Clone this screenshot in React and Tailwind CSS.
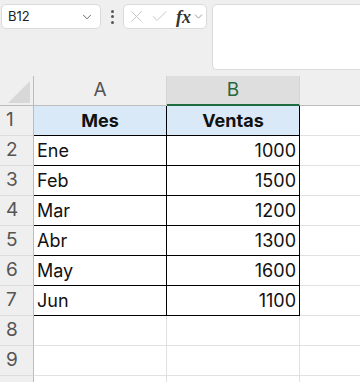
import { ChevronDown, X, Check } from 'lucide-react'

const rows = [
  ['Ene', 1000],
  ['Feb', 1500],
  ['Mar', 1200],
  ['Abr', 1300],
  ['May', 1600],
  ['Jun', 1100],
]

function RowHead({ n }) {
  return (
    <div className="flex h-full w-[34px] shrink-0 items-center border-r border-b border-r-[#bcbcbc] border-b-[#dcdcdc] bg-[#efefef] pl-[6px] text-[19px] text-[#555]">
      {n}
    </div>
  )
}

function Toolbar() {
  return (
    <div className="flex h-[76px] items-start bg-[#efefef] pt-[4px]">
      <div className="ml-px flex h-[25px] w-[100px] items-center justify-between rounded-[5px] border border-[#dadada] bg-white pl-[6px] pr-[6px] text-[13px] text-[#222]">
        <span>B12</span>
        <ChevronDown className="h-[14px] w-[14px] text-[#555]" strokeWidth={1.5} />
      </div>
      <div className="flex h-[25px] w-[22px] flex-col items-center justify-center gap-[2.5px]">
        <span className="h-[3px] w-[3px] rounded-full bg-[#555]" />
        <span className="h-[3px] w-[3px] rounded-full bg-[#555]" />
        <span className="h-[3px] w-[3px] rounded-full bg-[#555]" />
      </div>
      <div className="flex h-[25px] w-[84px] items-center rounded-[5px] border border-[#dadada] bg-white pl-[3px]">
        <X className="h-[19px] w-[19px] text-[#c4c4c4]" strokeWidth={1.2} />
        <Check className="ml-[4px] h-[19px] w-[19px] text-[#c4c4c4]" strokeWidth={1.2} />
        <span className="ml-[7px] text-[18px] font-bold italic leading-none text-[#333] [font-family:'Liberation_Serif',serif]">fx</span>
        <ChevronDown className="ml-[1px] h-[13px] w-[13px] text-[#888]" strokeWidth={1.5} />
      </div>
      <div className="ml-[5px] h-[66px] flex-1 rounded-l-[5px] border border-r-0 border-[#dadada] bg-white" />
    </div>
  )
}

export default function App() {
  return (
    <div className="h-[382px] w-[360px] overflow-hidden bg-white [font-family:Inter,'Liberation_Sans',sans-serif]">
      <Toolbar />

      {/* column headers */}
      <div className="flex h-[30px] bg-[#efefef]">
        <div className="relative w-[34px] shrink-0 border-r border-b border-[#bcbcbc]">
          <svg className="absolute right-[3px] bottom-[2px]" width="22" height="22" viewBox="0 0 22 22">
            <polygon points="22,0 22,22 0,22" fill="#d8d8d8" />
          </svg>
        </div>
        <div className="flex w-[133px] shrink-0 items-center justify-center border-r border-b border-r-[#d4d4d4] border-b-[#bcbcbc] text-[19px] text-[#555]">
          A
        </div>
        <div className="flex w-[133px] shrink-0 items-center justify-center border-r border-b-2 border-r-[#d4d4d4] border-b-[#1e6b41] bg-[#dedede] text-[19px] text-[#1e6b41]">
          B
        </div>
        <div className="flex-1 border-b border-[#bcbcbc]" />
      </div>

      {/* header row */}
      <div className="flex h-[30px]">
        <RowHead n={1} />
        <div className="flex w-[133px] shrink-0 items-center justify-center border-r border-b border-black bg-[#dae9f8] text-[18px] font-bold text-[#111]">
          Mes
        </div>
        <div className="flex w-[133px] shrink-0 items-center justify-center border-r border-b border-black bg-[#dae9f8] text-[18px] font-bold text-[#111]">
          Ventas
        </div>
        <div className="flex-1 border-b border-[#e1e1e1]" />
      </div>

      {rows.map(([mes, ventas], i) => (
        <div key={mes} className="flex h-[30px]">
          <RowHead n={i + 2} />
          <div className="flex w-[133px] shrink-0 items-center border-r border-b border-black pl-[3px] text-[18px] text-[#111]">
            {mes}
          </div>
          <div className="flex w-[133px] shrink-0 items-center justify-end border-r border-b border-black pr-[3px] text-[18px] text-[#111]">
            {ventas}
          </div>
          <div className="flex-1 border-b border-[#e1e1e1]" />
        </div>
      ))}

      {[8, 9, ''].map((n) => (
        <div key={n} className="flex h-[30px]">
          <RowHead n={n} />
          <div className="w-[133px] shrink-0 border-r border-b border-[#e1e1e1]" />
          <div className="w-[133px] shrink-0 border-r border-b border-[#e1e1e1]" />
          <div className="flex-1 border-b border-[#e1e1e1]" />
        </div>
      ))}
    </div>
  )
}
